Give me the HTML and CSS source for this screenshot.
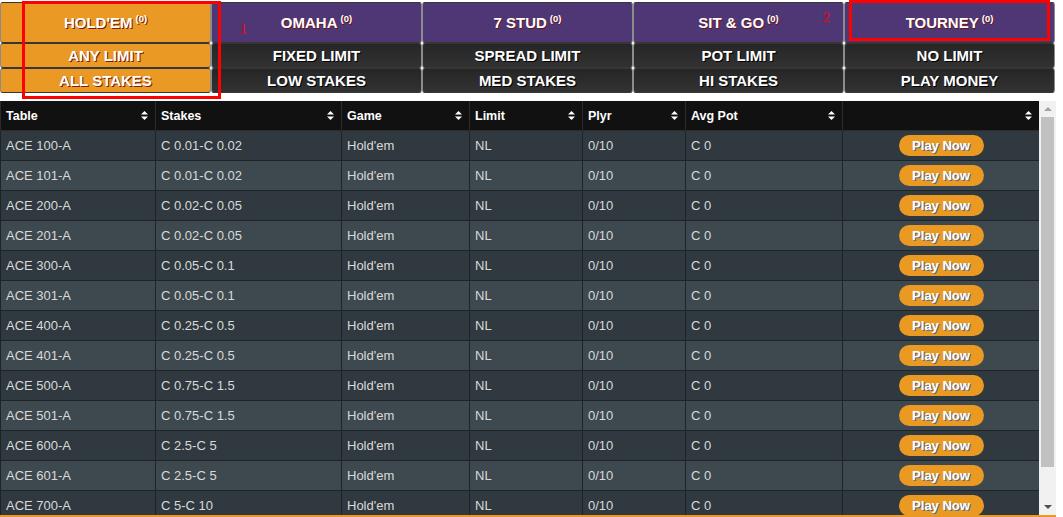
FILE: index.html
```html
<!DOCTYPE html>
<html>
<head>
<meta charset="utf-8">
<title>Lobby</title>
<link rel="stylesheet" href="styles.css">
</head>
<body>
<div class="app">
  <nav class="lobby-nav">
    <div class="cell cat active">HOLD'EM <sup>(0)</sup></div>
    <div class="cell cat">OMAHA <sup>(0)</sup></div>
    <div class="cell cat">7 STUD <sup>(0)</sup></div>
    <div class="cell cat">SIT &amp; GO <sup>(0)</sup></div>
    <div class="cell cat">TOURNEY <sup>(0)</sup></div>

    <div class="cell sub active">ANY LIMIT</div>
    <div class="cell sub">FIXED LIMIT</div>
    <div class="cell sub">SPREAD LIMIT</div>
    <div class="cell sub">POT LIMIT</div>
    <div class="cell sub">NO LIMIT</div>

    <div class="cell sub active">ALL STAKES</div>
    <div class="cell sub">LOW STAKES</div>
    <div class="cell sub">MED STAKES</div>
    <div class="cell sub">HI STAKES</div>
    <div class="cell sub">PLAY MONEY</div>
  </nav>

  <div class="tables-pane">
    <div class="table-wrap">
      <table class="tables">
        <colgroup>
          <col class="c-table"><col class="c-stakes"><col class="c-game"><col class="c-limit"><col class="c-plyr"><col class="c-pot"><col class="c-act">
        </colgroup>
        <thead>
          <tr>
            <th><div class="th-in"><span>Table</span><svg class="sort" viewBox="0 0 7 9"><polygon points="0,3.5 3.5,0 7,3.5"/><polygon points="0,5.5 3.5,9 7,5.5"/></svg></div></th>
            <th><div class="th-in"><span>Stakes</span><svg class="sort" viewBox="0 0 7 9"><polygon points="0,3.5 3.5,0 7,3.5"/><polygon points="0,5.5 3.5,9 7,5.5"/></svg></div></th>
            <th><div class="th-in"><span>Game</span><svg class="sort" viewBox="0 0 7 9"><polygon points="0,3.5 3.5,0 7,3.5"/><polygon points="0,5.5 3.5,9 7,5.5"/></svg></div></th>
            <th><div class="th-in"><span>Limit</span><svg class="sort" viewBox="0 0 7 9"><polygon points="0,3.5 3.5,0 7,3.5"/><polygon points="0,5.5 3.5,9 7,5.5"/></svg></div></th>
            <th><div class="th-in"><span>Plyr</span><svg class="sort" viewBox="0 0 7 9"><polygon points="0,3.5 3.5,0 7,3.5"/><polygon points="0,5.5 3.5,9 7,5.5"/></svg></div></th>
            <th><div class="th-in"><span>Avg Pot</span><svg class="sort" viewBox="0 0 7 9"><polygon points="0,3.5 3.5,0 7,3.5"/><polygon points="0,5.5 3.5,9 7,5.5"/></svg></div></th>
            <th><div class="th-in"><span></span><svg class="sort" viewBox="0 0 7 9"><polygon points="0,3.5 3.5,0 7,3.5"/><polygon points="0,5.5 3.5,9 7,5.5"/></svg></div></th>
          </tr>
        </thead>
        <tbody>
          <tr><td>ACE 100-A</td><td>C 0.01-C 0.02</td><td>Hold'em</td><td>NL</td><td>0/10</td><td>C 0</td><td class="act"><span class="play">Play Now</span></td></tr>
          <tr><td>ACE 101-A</td><td>C 0.01-C 0.02</td><td>Hold'em</td><td>NL</td><td>0/10</td><td>C 0</td><td class="act"><span class="play">Play Now</span></td></tr>
          <tr><td>ACE 200-A</td><td>C 0.02-C 0.05</td><td>Hold'em</td><td>NL</td><td>0/10</td><td>C 0</td><td class="act"><span class="play">Play Now</span></td></tr>
          <tr><td>ACE 201-A</td><td>C 0.02-C 0.05</td><td>Hold'em</td><td>NL</td><td>0/10</td><td>C 0</td><td class="act"><span class="play">Play Now</span></td></tr>
          <tr><td>ACE 300-A</td><td>C 0.05-C 0.1</td><td>Hold'em</td><td>NL</td><td>0/10</td><td>C 0</td><td class="act"><span class="play">Play Now</span></td></tr>
          <tr><td>ACE 301-A</td><td>C 0.05-C 0.1</td><td>Hold'em</td><td>NL</td><td>0/10</td><td>C 0</td><td class="act"><span class="play">Play Now</span></td></tr>
          <tr><td>ACE 400-A</td><td>C 0.25-C 0.5</td><td>Hold'em</td><td>NL</td><td>0/10</td><td>C 0</td><td class="act"><span class="play">Play Now</span></td></tr>
          <tr><td>ACE 401-A</td><td>C 0.25-C 0.5</td><td>Hold'em</td><td>NL</td><td>0/10</td><td>C 0</td><td class="act"><span class="play">Play Now</span></td></tr>
          <tr><td>ACE 500-A</td><td>C 0.75-C 1.5</td><td>Hold'em</td><td>NL</td><td>0/10</td><td>C 0</td><td class="act"><span class="play">Play Now</span></td></tr>
          <tr><td>ACE 501-A</td><td>C 0.75-C 1.5</td><td>Hold'em</td><td>NL</td><td>0/10</td><td>C 0</td><td class="act"><span class="play">Play Now</span></td></tr>
          <tr><td>ACE 600-A</td><td>C 2.5-C 5</td><td>Hold'em</td><td>NL</td><td>0/10</td><td>C 0</td><td class="act"><span class="play">Play Now</span></td></tr>
          <tr><td>ACE 601-A</td><td>C 2.5-C 5</td><td>Hold'em</td><td>NL</td><td>0/10</td><td>C 0</td><td class="act"><span class="play">Play Now</span></td></tr>
          <tr><td>ACE 700-A</td><td>C 5-C 10</td><td>Hold'em</td><td>NL</td><td>0/10</td><td>C 0</td><td class="act"><span class="play">Play Now</span></td></tr>
        </tbody>
      </table>
    </div>
    <div class="scrollbar">
      <div class="sb-btn"><svg viewBox="0 0 8 4" class="sb-arrow up"><polygon points="0,4 4,0 8,4"/></svg></div>
      <div class="sb-track"><div class="sb-thumb"></div></div>
      <div class="sb-btn"><svg viewBox="0 0 8 4" class="sb-arrow down"><polygon points="0,0 8,0 4,4"/></svg></div>
    </div>
  </div>
  <div class="footer-line"></div>

  <div class="mark mark-1"></div>
  <div class="mark mark-2"></div>
  <span class="mark-num num-1">1</span>
  <span class="mark-num num-2">2</span>
</div>
</body>
</html>
```

FILE: styles.css
```css
html, body {
  margin: 0;
  padding: 0;
  background: #ffffff;
}

body {
  font-family: "Liberation Sans", Arial, sans-serif;
}

.app {
  position: relative;
  width: 1056px;
  height: 517px;
  overflow: hidden;
}

/* ---------- top navigation ---------- */
.lobby-nav {
  display: grid;
  grid-template-columns: repeat(5, 211px);
  grid-template-rows: 41px 25px 25px;
  margin-top: 2px;
}

.cell {
  display: flex;
  align-items: center;
  justify-content: center;
  box-sizing: border-box;
  border: 1px solid;
  border-color: #363636 #8c8c8c #363636 #8c8c8c;
  border-radius: 3px;
  color: #ffffff;
  font-weight: bold;
  font-size: 15px;
  white-space: nowrap;
}

.cell sup {
  font-size: 9.5px;
  position: relative;
  top: -4px;
  margin-left: 3px;
  align-self: center;
}

.cat {
  background: #4f3775;
  text-shadow: 1px 1px 0 #6d1111;
}

.sub {
  background: linear-gradient(#262626, #323232);
  text-shadow: 1px 1px 0 #000000;
}

.cell.active {
  background: #eb9925;
  text-shadow: 1px 1px 0 #7a1a10;
}

/* ---------- tables pane ---------- */
.tables-pane {
  display: flex;
  margin-top: 8px;
  height: 414px;
}

.table-wrap {
  width: 1039px;
  overflow: hidden;
}

.tables {
  width: 1039px;
  border-collapse: collapse;
  table-layout: fixed;
  font-size: 13px;
}

.c-table { width: 155px; }
.c-stakes { width: 186px; }
.c-game { width: 128px; }
.c-limit { width: 113px; }
.c-plyr { width: 103px; }
.c-pot { width: 157px; }
.c-act { width: 197px; }

.tables th {
  background: #111111;
  color: #ffffff;
  font-weight: bold;
  font-size: 12.5px;
  text-align: left;
  height: 29px;
  padding: 0 7px 0 5px;
  border: 1px solid #2c2c2c;
  border-top: none;
}

.th-in {
  display: flex;
  align-items: center;
  justify-content: space-between;
}

.sort {
  width: 7px;
  height: 9px;
  fill: #ffffff;
}

.tables td {
  height: 29px;
  padding: 0 5px;
  color: #d9d9d9;
  border: 1px solid #1e2326;
  white-space: nowrap;
  overflow: hidden;
}

.tables tbody tr:nth-child(odd) td {
  background: #2f393f;
}

.tables tbody tr:nth-child(even) td {
  background: #3e494f;
}

.tables td.act {
  text-align: center;
  padding: 0;
}

.play {
  display: inline-block;
  width: 85px;
  height: 21px;
  line-height: 21px;
  border-radius: 11px;
  background: #ea9a22;
  color: #ffffff;
  font-weight: bold;
  font-size: 13px;
  text-shadow: 1px 1px 0 #4f6f9f;
  vertical-align: middle;
}

/* ---------- scrollbar ---------- */
.scrollbar {
  width: 17px;
  background: #f1f1f1;
  display: flex;
  flex-direction: column;
}

.sb-btn {
  height: 16px;
  display: flex;
  align-items: center;
  justify-content: center;
}

.sb-arrow {
  width: 8px;
  height: 4px;
}

.sb-arrow.up { fill: #a3a3a3; }
.sb-arrow.down { fill: #505050; }

.sb-track {
  flex: 1;
  padding: 0 2px;
}

.sb-thumb {
  height: 350px;
  background: #c1c1c1;
}

.footer-line {
  height: 3px;
  background: #eb9925;
}

/* ---------- annotation marks ---------- */
.mark {
  position: absolute;
  border: 3px solid #ff0000;
  box-sizing: border-box;
}

.mark-1 {
  left: 22px;
  top: 1px;
  width: 199px;
  height: 98px;
}

.mark-2 {
  left: 849px;
  top: 0;
  width: 201px;
  height: 41px;
}

.mark-num {
  position: absolute;
  color: #ff0000;
  font-family: "Liberation Serif", serif;
  font-size: 14px;
  line-height: 1;
}

.num-1 { left: 240px; top: 23px; }
.num-2 { left: 823px; top: 11px; }
```
